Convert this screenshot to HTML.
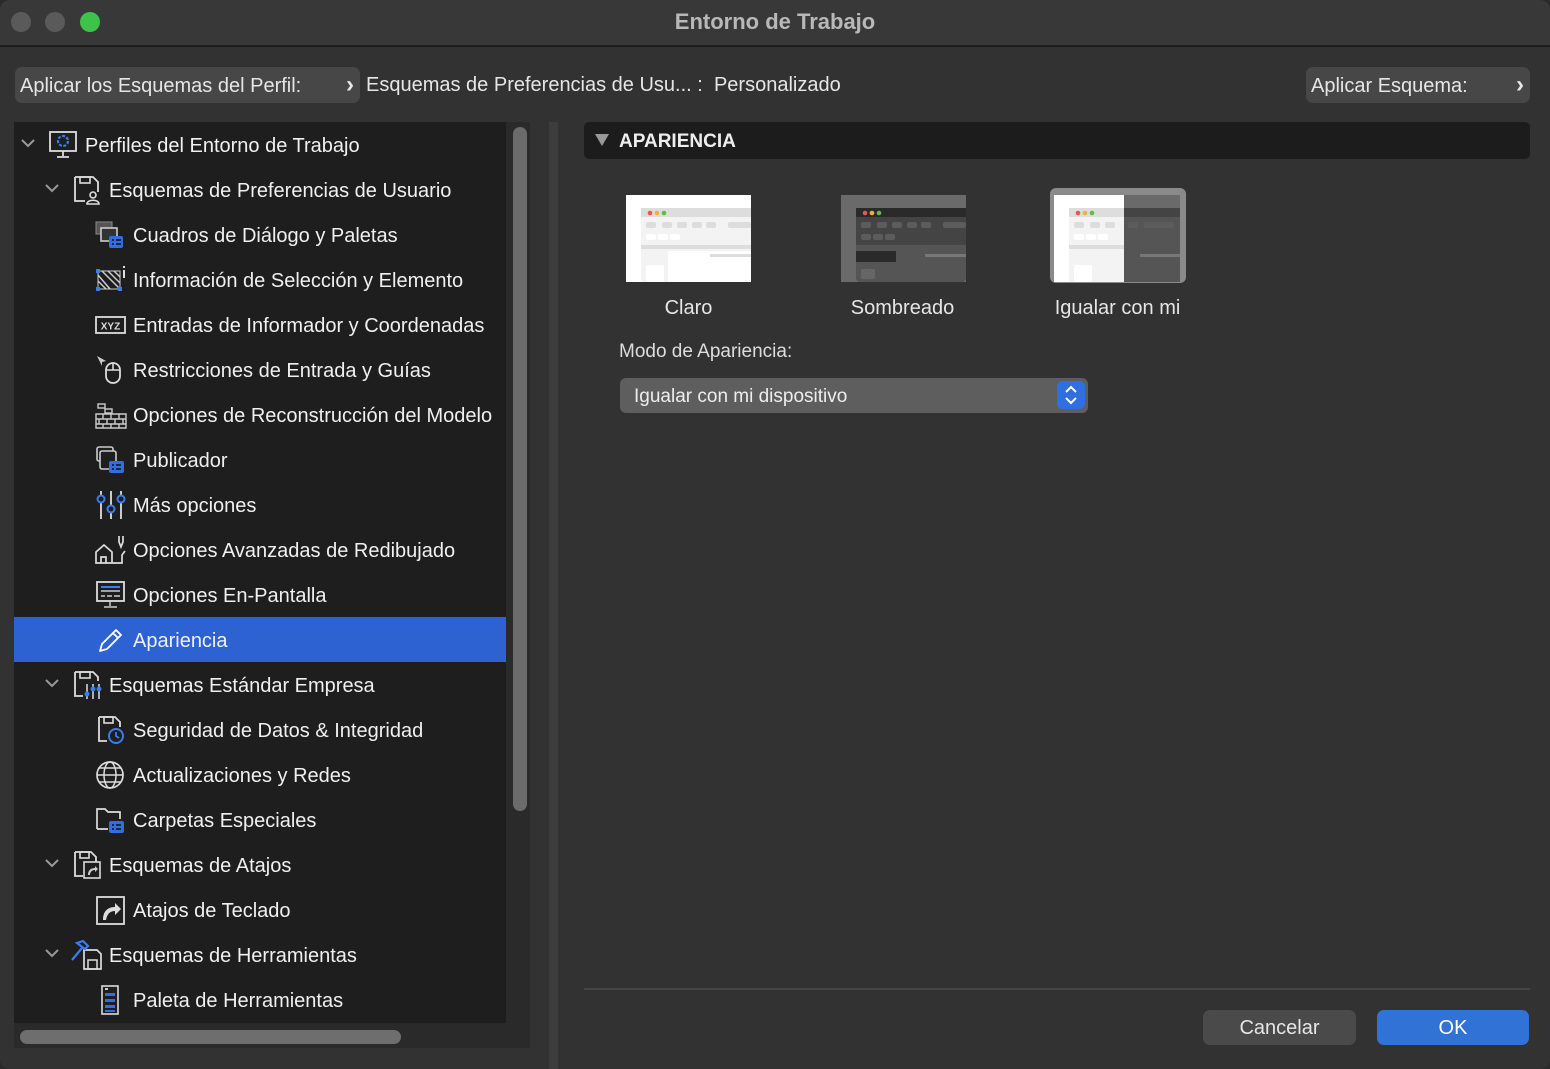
<!DOCTYPE html>
<html><head><meta charset="utf-8"><style>
*{margin:0;padding:0;box-sizing:border-box}
body{width:1550px;height:1069px;background:#2b2b2b;font-family:"Liberation Sans",sans-serif;color:#e8e8e8;overflow:hidden;position:relative}
.win{position:absolute;left:0;top:0;width:1550px;height:1069px;background:#323232;border-radius:10px;overflow:hidden}
.title{position:absolute;left:0;top:0;width:1550px;height:47px;background:#383838;border-bottom:2px solid #1e1e1e}
.title .t{position:absolute;left:0;right:0;top:9px;text-align:center;font-size:22px;font-weight:bold;color:#b8b8b8}
.dot{position:absolute;top:12px;width:20px;height:20px;border-radius:50%;background:#5a5a5a}
.abs{position:absolute}
.btn{position:absolute;background:#474747;border-radius:7px;font-size:20px;color:#e6e6e6}
.tree{position:absolute;left:14px;top:122px;width:492px;height:901px;background:#1e1e1e;overflow:hidden}
.row{position:absolute;left:0;width:492px;height:45px;font-size:20px;line-height:49px;color:#f0f0f0;white-space:nowrap}
.row.sel{background:#2d62d3;line-height:49px}
.row svg{position:absolute;top:8px}
.hdr{position:absolute;left:584px;top:122px;width:946px;height:37px;background:#1c1c1c;border-radius:5px}
.lbl{position:absolute;font-size:20px;color:#e6e6e6;text-align:center}
.cv{position:absolute;right:6px;font-size:24px;font-weight:bold;top:-1px}
</style></head><body><div class="win">
<div class="title"><div class="dot" style="left:11px"></div><div class="dot" style="left:45px"></div><div class="dot" style="left:80px;background:#3ec34a"></div><div class="t">Entorno de Trabajo</div></div>

<div class="btn" style="left:15px;top:67px;width:345px;height:36px;line-height:38px;padding-left:5px">Aplicar los Esquemas del Perfil:<span class="cv">›</span></div>
<div class="abs" style="left:366px;top:74px;font-size:20px;color:#e6e6e6">Esquemas de Preferencias de Usu... : &nbsp;Personalizado</div>
<div class="btn" style="left:1306px;top:67px;width:224px;height:36px;line-height:38px;padding-left:5px">Aplicar Esquema:<span class="cv">›</span></div>

<div class="tree">
<div class="row" style="top:0"><svg style="left:6px;top:16px" width="16" height="12"><path d="M2 2l6 6 6-6" stroke="#999" stroke-width="2" fill="none"/></svg><svg style="left:34px;top:7px" width="30" height="30"><rect x="2" y="3" width="26" height="19" fill="none" stroke="#ddd" stroke-width="1.8"/><path d="M15 22v5M9 28h12" stroke="#ddd" stroke-width="1.8"/><circle cx="15" cy="12" r="5" fill="none" stroke="#3b7cf0" stroke-width="2.2" stroke-dasharray="3 1.5"/></svg><span style="position:absolute;left:71px">Perfiles del Entorno de Trabajo</span></div>

<div class="row" style="top:45px"><svg style="left:30px;top:16px" width="16" height="12"><path d="M2 2l6 6 6-6" stroke="#999" stroke-width="2" fill="none"/></svg><svg style="left:58px" width="30" height="30"><path d="M3 2h18l5 5v10M3 2v24h10" fill="none" stroke="#ddd" stroke-width="1.8"/><rect x="8" y="2" width="10" height="6" fill="none" stroke="#ddd" stroke-width="1.6"/><circle cx="21" cy="20" r="3" fill="none" stroke="#ddd" stroke-width="1.6"/><path d="M15 29c0-5 12-5 12 0z" fill="none" stroke="#ddd" stroke-width="1.6"/></svg><span style="position:absolute;left:95px">Esquemas de Preferencias de Usuario</span></div>

<div class="row" style="top:90px"><svg style="left:81px" width="32" height="30"><rect x="1" y="2" width="16" height="12" fill="#555" stroke="#888"/><rect x="6" y="8" width="16" height="13" fill="#333" stroke="#ccc" stroke-width="1.6"/><rect x="14" y="16" width="14" height="12" rx="2" fill="#2f6fe0"/><path d="M17 20h2M21 20h5M17 24h2M21 24h5" stroke="#111" stroke-width="1.4"/></svg><span style="position:absolute;left:119px">Cuadros de Diálogo y Paletas</span></div>

<div class="row" style="top:135px"><svg style="left:81px" width="32" height="30"><path d="M3 6h22v18H3z" fill="none" stroke="#ccc" stroke-width="1"/><path d="M3 10l12 14M3 16l8 8M7 6l18 18M13 6l12 12M19 6l6 6" stroke="#ccc" stroke-width="1.5"/><rect x="1" y="4" width="4" height="4" fill="#3b7cf0"/><rect x="1" y="22" width="4" height="4" fill="#3b7cf0"/><rect x="23" y="22" width="4" height="4" fill="#3b7cf0"/><path d="M29 1v2M29 5v8" stroke="#ddd" stroke-width="2"/></svg><span style="position:absolute;left:119px">Información de Selección y Elemento</span></div>

<div class="row" style="top:180px"><svg style="left:81px" width="32" height="30"><rect x="1" y="7" width="29" height="16" fill="none" stroke="#ddd" stroke-width="1.8"/><text x="15.5" y="19.5" font-size="10" font-weight="bold" fill="#ddd" text-anchor="middle" font-family="Liberation Sans">XYZ</text></svg><span style="position:absolute;left:119px">Entradas de Informador y Coordenadas</span></div>

<div class="row" style="top:225px"><svg style="left:81px" width="32" height="30"><path d="M2 1l9 5-4 1 0 4z" fill="#ccc"/><rect x="11" y="8" width="14" height="20" rx="7" fill="none" stroke="#ddd" stroke-width="1.8"/><path d="M18 8v7M11 15h14" stroke="#ddd" stroke-width="1.6"/></svg><span style="position:absolute;left:119px">Restricciones de Entrada y Guías</span></div>

<div class="row" style="top:270px"><svg style="left:81px" width="32" height="30"><rect x="3" y="4" width="7" height="4" fill="none" stroke="#ccc" stroke-width="1.4"/><rect x="10" y="9" width="7" height="4" fill="none" stroke="#ccc" stroke-width="1.4"/><path d="M1 14h30v14H1zM1 19h30M1 24h30M8 14v5M16 14v5M24 14v5M4 19v5M12 19v5M20 19v5M28 19v5M8 24v4M16 24v4M24 24v4" fill="none" stroke="#ccc" stroke-width="1.4"/></svg><span style="position:absolute;left:119px">Opciones de Reconstrucción del Modelo</span></div>

<div class="row" style="top:315px"><svg style="left:81px" width="32" height="30"><rect x="2" y="2" width="16" height="14" rx="2" fill="none" stroke="#ccc" stroke-width="1.6"/><rect x="5" y="6" width="16" height="18" rx="2" fill="#1e1e1e" stroke="#ccc" stroke-width="1.6"/><rect x="14" y="16" width="15" height="12" rx="2" fill="#2f6fe0"/><path d="M17 20h2M21 20h5M17 24h2M21 24h5" stroke="#111" stroke-width="1.4"/></svg><span style="position:absolute;left:119px">Publicador</span></div>

<div class="row" style="top:360px"><svg style="left:81px" width="32" height="30"><path d="M6 1v28M16 1v28M26 1v28" stroke="#ddd" stroke-width="1.8"/><circle cx="6" cy="9" r="3.5" fill="#1e1e1e" stroke="#3b7cf0" stroke-width="2"/><circle cx="16" cy="19" r="3.5" fill="#1e1e1e" stroke="#3b7cf0" stroke-width="2"/><circle cx="26" cy="9" r="3.5" fill="#1e1e1e" stroke="#3b7cf0" stroke-width="2"/></svg><span style="position:absolute;left:119px">Más opciones</span></div>

<div class="row" style="top:405px"><svg style="left:81px" width="32" height="30"><path d="M1 28V17l8-7 8 7v11zM6 28v-6h5v6M17 28h10V20l3-4M24 1v6l2 5 2-5V1" fill="none" stroke="#ddd" stroke-width="1.7"/></svg><span style="position:absolute;left:119px">Opciones Avanzadas de Redibujado</span></div>

<div class="row" style="top:450px"><svg style="left:81px" width="32" height="30"><rect x="2" y="2" width="27" height="19" fill="none" stroke="#ddd" stroke-width="1.8"/><path d="M6 7h19" stroke="#3b7cf0" stroke-width="2"/><path d="M6 11h19M6 16h4M12 16h5M19 16h6M15 21v5M9 27h13" stroke="#ccc" stroke-width="1.5"/></svg><span style="position:absolute;left:119px">Opciones En-Pantalla</span></div>

<div class="row sel" style="top:495px"><svg style="left:81px" width="32" height="30"><path d="M5 26l2-7L21 5l5 5-14 14z M18 8l5 5" fill="none" stroke="#fff" stroke-width="1.8" stroke-linejoin="round"/></svg><span style="position:absolute;left:119px">Apariencia</span></div>

<div class="row" style="top:540px"><svg style="left:30px;top:16px" width="16" height="12"><path d="M2 2l6 6 6-6" stroke="#999" stroke-width="2" fill="none"/></svg><svg style="left:58px" width="30" height="30"><path d="M3 2h18l5 5v4M3 2v24h8" fill="none" stroke="#ddd" stroke-width="1.8"/><rect x="8" y="2" width="10" height="6" fill="none" stroke="#ddd" stroke-width="1.6"/><path d="M15 14v15M21 14v15M27 14v15" stroke="#ddd" stroke-width="1.5"/><circle cx="15" cy="24" r="2.5" fill="#3b7cf0"/><circle cx="21" cy="19" r="2.5" fill="#3b7cf0"/><circle cx="27" cy="19" r="2.5" fill="#3b7cf0"/></svg><span style="position:absolute;left:95px">Esquemas Estándar Empresa</span></div>

<div class="row" style="top:585px"><svg style="left:81px" width="32" height="30"><path d="M4 2h16l5 5v5M4 2v24h8" fill="none" stroke="#ddd" stroke-width="1.8"/><rect x="9" y="2" width="9" height="6" fill="none" stroke="#ddd" stroke-width="1.6"/><circle cx="21" cy="21" r="7" fill="#1e1e1e" stroke="#3b7cf0" stroke-width="2"/><path d="M21 17v4l3 2" stroke="#3b7cf0" stroke-width="1.8" fill="none"/></svg><span style="position:absolute;left:119px">Seguridad de Datos &amp; Integridad</span></div>

<div class="row" style="top:630px"><svg style="left:81px" width="32" height="30"><circle cx="15" cy="15" r="13" fill="none" stroke="#ddd" stroke-width="1.7"/><ellipse cx="15" cy="15" rx="6" ry="13" fill="none" stroke="#ddd" stroke-width="1.5"/><path d="M2 15h26M4 8h22M4 22h22" stroke="#ddd" stroke-width="1.5"/></svg><span style="position:absolute;left:119px">Actualizaciones y Redes</span></div>

<div class="row" style="top:675px"><svg style="left:81px" width="32" height="30"><path d="M2 24V4h8l3 3h12v7M2 24h11" fill="none" stroke="#ddd" stroke-width="1.7"/><rect x="14" y="16" width="15" height="12" rx="2" fill="#2f6fe0"/><path d="M17 20h2M21 20h5M17 24h2M21 24h5" stroke="#111" stroke-width="1.4"/></svg><span style="position:absolute;left:119px">Carpetas Especiales</span></div>

<div class="row" style="top:720px"><svg style="left:30px;top:16px" width="16" height="12"><path d="M2 2l6 6 6-6" stroke="#999" stroke-width="2" fill="none"/></svg><svg style="left:58px" width="30" height="30"><path d="M3 2h16l5 5v5M3 2v24h8" fill="none" stroke="#ddd" stroke-width="1.8"/><rect x="8" y="2" width="9" height="6" fill="none" stroke="#ddd" stroke-width="1.6"/><rect x="12" y="12" width="16" height="16" fill="none" stroke="#ddd" stroke-width="1.6"/><path d="M16 25c0-5 3-7 7-7v-2l3 3-3 3v-2c-3 0-5 2-5 5z" fill="#ccc"/></svg><span style="position:absolute;left:95px">Esquemas de Atajos</span></div>

<div class="row" style="top:765px"><svg style="left:81px" width="32" height="30"><rect x="2" y="2" width="27" height="27" fill="none" stroke="#ddd" stroke-width="1.8"/><path d="M8 25c0-9 5-13 12-13V8l6 6-6 6v-4c-5 0-8 3-9 9z" fill="#ddd"/></svg><span style="position:absolute;left:119px">Atajos de Teclado</span></div>

<div class="row" style="top:810px"><svg style="left:30px;top:16px" width="16" height="12"><path d="M2 2l6 6 6-6" stroke="#999" stroke-width="2" fill="none"/></svg><svg style="left:56px" width="32" height="30"><path d="M14 10h13l4 4v15H14z" fill="none" stroke="#ddd" stroke-width="1.7"/><rect x="18" y="20" width="9" height="9" fill="none" stroke="#ddd" stroke-width="1.5"/><path d="M2 20L12 8M7 3l6-2 5 5-3 3z" fill="none" stroke="#3b7cf0" stroke-width="2.2"/></svg><span style="position:absolute;left:95px">Esquemas de Herramientas</span></div>

<div class="row" style="top:855px"><svg style="left:81px" width="32" height="30"><rect x="7" y="1" width="16" height="28" fill="none" stroke="#ddd" stroke-width="1.6"/><rect x="10" y="8" width="10" height="3" fill="#2f6fe0"/><rect x="10" y="14" width="10" height="3" fill="#2f6fe0"/><rect x="10" y="20" width="10" height="3" fill="#2f6fe0"/><rect x="10" y="25" width="10" height="2" fill="#2f6fe0"/><rect x="10" y="3" width="3" height="2" fill="#ccc"/></svg><span style="position:absolute;left:119px">Paleta de Herramientas</span></div>
</div>

<div class="abs" style="left:506px;top:122px;width:24px;height:926px;background:#2a2a2a"></div>
<div class="abs" style="left:513px;top:127px;width:14px;height:684px;border-radius:7px;background:#6b6b6b"></div>
<div class="abs" style="left:14px;top:1023px;width:516px;height:25px;background:#2a2a2a"></div>
<div class="abs" style="left:20px;top:1030px;width:381px;height:14px;border-radius:7px;background:#6e6e6e"></div>
<div class="abs" style="left:549px;top:122px;width:9px;height:947px;background:#3d3d3d"></div>

<div class="hdr"><svg class="abs" style="left:11px;top:12px" width="14" height="12"><path d="M0 0h14L7 12z" fill="#999"/></svg><span class="abs" style="left:35px;top:9px;font-size:19px;font-weight:bold;color:#eee">APARIENCIA</span></div>

<svg class="abs" style="left:626px;top:195px" width="125" height="87"><rect width="125" height="87" fill="#fff"/><rect x="15" y="13" width="110" height="74" rx="4" fill="#f3f3f3"/><rect x="15" y="13" width="110" height="9" fill="#ddd"/><circle cx="24" cy="18" r="2.3" fill="#e25a4f"/><circle cx="31" cy="18" r="2.3" fill="#e8b43a"/><circle cx="38" cy="18" r="2.3" fill="#5bbf45"/><g fill="#ddd"><rect x="20" y="27" width="10" height="6" rx="2"/><rect x="36" y="27" width="10" height="6" rx="2"/><rect x="51" y="27" width="10" height="6" rx="2"/><rect x="66" y="27" width="10" height="6" rx="2"/><rect x="80" y="27" width="10" height="6" rx="2"/><rect x="102" y="27" width="23" height="6" rx="2"/></g><g fill="#fff"><rect x="20" y="39" width="10" height="6" rx="2"/><rect x="32" y="39" width="10" height="6" rx="2"/><rect x="44" y="39" width="10" height="6" rx="2"/><rect x="42" y="56" width="83" height="31"/><rect x="20" y="70" width="18" height="17" rx="2"/></g><rect x="15" y="50" width="110" height="4" fill="#ddd"/><rect x="84" y="59" width="41" height="3" fill="#ddd"/></svg>

<svg class="abs" style="left:841px;top:195px" width="125" height="87"><rect width="125" height="87" fill="#6a6a6a"/><rect x="15" y="13" width="110" height="74" rx="4" fill="#555"/><rect x="15" y="13" width="110" height="9" fill="#2a2a2a"/><circle cx="24" cy="18" r="2.3" fill="#e25a4f"/><circle cx="31" cy="18" r="2.3" fill="#e8b43a"/><circle cx="38" cy="18" r="2.3" fill="#5bbf45"/><rect x="15" y="22" width="110" height="28" fill="#444"/><g fill="#5c5c5c"><rect x="20" y="27" width="10" height="6" rx="2"/><rect x="36" y="27" width="10" height="6" rx="2"/><rect x="51" y="27" width="10" height="6" rx="2"/><rect x="66" y="27" width="10" height="6" rx="2"/><rect x="80" y="27" width="10" height="6" rx="2"/><rect x="102" y="27" width="23" height="6" rx="2"/><rect x="20" y="39" width="10" height="6" rx="2"/><rect x="32" y="39" width="10" height="6" rx="2"/><rect x="44" y="39" width="10" height="6" rx="2"/></g><rect x="15" y="56" width="40" height="11" fill="#2a2a2a"/><rect x="20" y="74" width="14" height="10" rx="2" fill="#666"/><rect x="84" y="59" width="41" height="3" fill="#777"/></svg>

<div class="abs" style="left:1050px;top:188px;width:136px;height:95px;border-radius:6px;background:#8a8a8a"></div>
<svg class="abs" style="left:1054px;top:195px" width="126" height="87"><rect width="126" height="87" fill="#fff"/><rect x="70" width="56" height="87" fill="#6a6a6a"/><rect x="15" y="13" width="55" height="74" fill="#f3f3f3"/><rect x="70" y="13" width="56" height="74" fill="#555"/><rect x="15" y="13" width="55" height="9" fill="#ddd"/><rect x="70" y="13" width="56" height="9" fill="#444"/><circle cx="24" cy="18" r="2.3" fill="#e25a4f"/><circle cx="31" cy="18" r="2.3" fill="#e8b43a"/><circle cx="38" cy="18" r="2.3" fill="#5bbf45"/><g fill="#ddd"><rect x="20" y="27" width="10" height="6" rx="2"/><rect x="36" y="27" width="10" height="6" rx="2"/><rect x="51" y="27" width="10" height="6" rx="2"/></g><g fill="#5c5c5c"><rect x="74" y="27" width="10" height="6" rx="2"/><rect x="90" y="27" width="30" height="6" rx="2"/></g><g fill="#fff"><rect x="20" y="39" width="10" height="6" rx="2"/><rect x="32" y="39" width="10" height="6" rx="2"/><rect x="44" y="39" width="10" height="6" rx="2"/><rect x="20" y="70" width="18" height="17" rx="2"/></g><rect x="15" y="50" width="55" height="4" fill="#ddd"/><rect x="86" y="59" width="40" height="3" fill="#777"/></svg>

<div class="lbl" style="left:626px;width:125px;top:297px">Claro</div>
<div class="lbl" style="left:830px;width:145px;top:297px">Sombreado</div>
<div class="lbl" style="left:1040px;width:155px;top:297px">Igualar con mi</div>
<div class="abs" style="left:619px;top:341px;font-size:19px;color:#ddd">Modo de Apariencia:</div>
<div class="abs" style="left:620px;top:378px;width:468px;height:35px;background:#5e5e5e;border-radius:6px;font-size:19px;line-height:37px;padding-left:14px;color:#eee">Igualar con mi dispositivo
<div class="abs" style="left:437px;top:3px;width:28px;height:28px;background:#2f6fe0;border-radius:5px"><svg width="28" height="28"><path d="M9 11l5-5 5 5M9 17l5 5 5-5" stroke="#fff" stroke-width="2" fill="none"/></svg></div></div>

<div class="abs" style="left:584px;top:988px;width:946px;height:2px;background:#454545"></div>
<div class="btn" style="left:1203px;top:1010px;width:153px;height:35px;line-height:37px;text-align:center;background:#4a4a4a">Cancelar</div>
<div class="btn" style="left:1377px;top:1010px;width:152px;height:35px;line-height:37px;text-align:center;background:#3172d6;color:#fff">OK</div>
</div></body></html>
